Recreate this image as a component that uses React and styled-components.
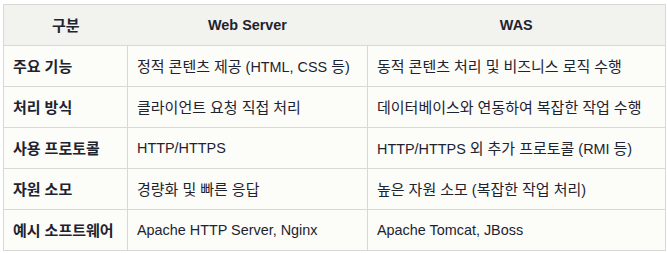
import React from "react";
import styled, { createGlobalStyle } from "styled-components";

const Global = createGlobalStyle`
  html, body { margin: 0; padding: 0; background: #ffffff; }
  body {
    font-family: "Liberation Sans", Arial, "Noto Sans CJK KR", sans-serif;
    color: #1d2330;
  }
`;

const Page = styled.div`
  padding: 4px 0 0 3px;
`;

const Table = styled.table`
  border-collapse: collapse;
  table-layout: fixed;
  width: 663px;
  font-size: 14.4px;
  background: #fcfcf9;
  border: 1px solid #d9d9d3;
`;

const HeadRow = styled.tr`
  background: #f2f2ee;
  height: 41px;
`;

const HeadCell = styled.th`
  font-weight: 700;
  text-align: center;
  padding: 0 8px;
  border-bottom: 1px solid #d9d9d3;
  vertical-align: middle;
  line-height: 18px;
`;

const Row = styled.tr`
  height: 41px;
`;

const Cell = styled.td`
  padding: 0 9px;
  border: 1px solid #d9d9d3;
  vertical-align: middle;
  font-weight: ${(p) => (p.$label ? 700 : 400)};
  white-space: nowrap;
  line-height: 18px;
`;

const Hangul = styled.span`
  font-family: "Noto Sans CJK KR", sans-serif;
  font-size: 15px;
`;

function Txt({ children }) {
  const parts = String(children).split(/([\u1100-\u11FF\u3130-\u318F\uAC00-\uD7AF]+)/);
  return parts.map((p, i) =>
    i % 2 === 1 ? <Hangul key={i}>{p}</Hangul> : <React.Fragment key={i}>{p}</React.Fragment>
  );
}

const rows = [
  ["주요 기능", "정적 콘텐츠 제공 (HTML, CSS 등)", "동적 콘텐츠 처리 및 비즈니스 로직 수행"],
  ["처리 방식", "클라이언트 요청 직접 처리", "데이터베이스와 연동하여 복잡한 작업 수행"],
  ["사용 프로토콜", "HTTP/HTTPS", "HTTP/HTTPS 외 추가 프로토콜 (RMI 등)"],
  ["자원 소모", "경량화 및 빠른 응답", "높은 자원 소모 (복잡한 작업 처리)"],
  ["예시 소프트웨어", "Apache HTTP Server, Nginx", "Apache Tomcat, JBoss"],
];

export default function App() {
  return (
    <>
      <Global />
      <Page>
        <Table>
          <colgroup>
            <col style={{ width: 124 }} />
            <col style={{ width: 240 }} />
            <col style={{ width: 298 }} />
          </colgroup>
          <thead>
            <HeadRow>
              <HeadCell><Txt>구분</Txt></HeadCell>
              <HeadCell>Web Server</HeadCell>
              <HeadCell>WAS</HeadCell>
            </HeadRow>
          </thead>
          <tbody>
            {rows.map((r) => (
              <Row key={r[0]}>
                <Cell $label><Txt>{r[0]}</Txt></Cell>
                <Cell><Txt>{r[1]}</Txt></Cell>
                <Cell><Txt>{r[2]}</Txt></Cell>
              </Row>
            ))}
          </tbody>
        </Table>
      </Page>
    </>
  );
}
